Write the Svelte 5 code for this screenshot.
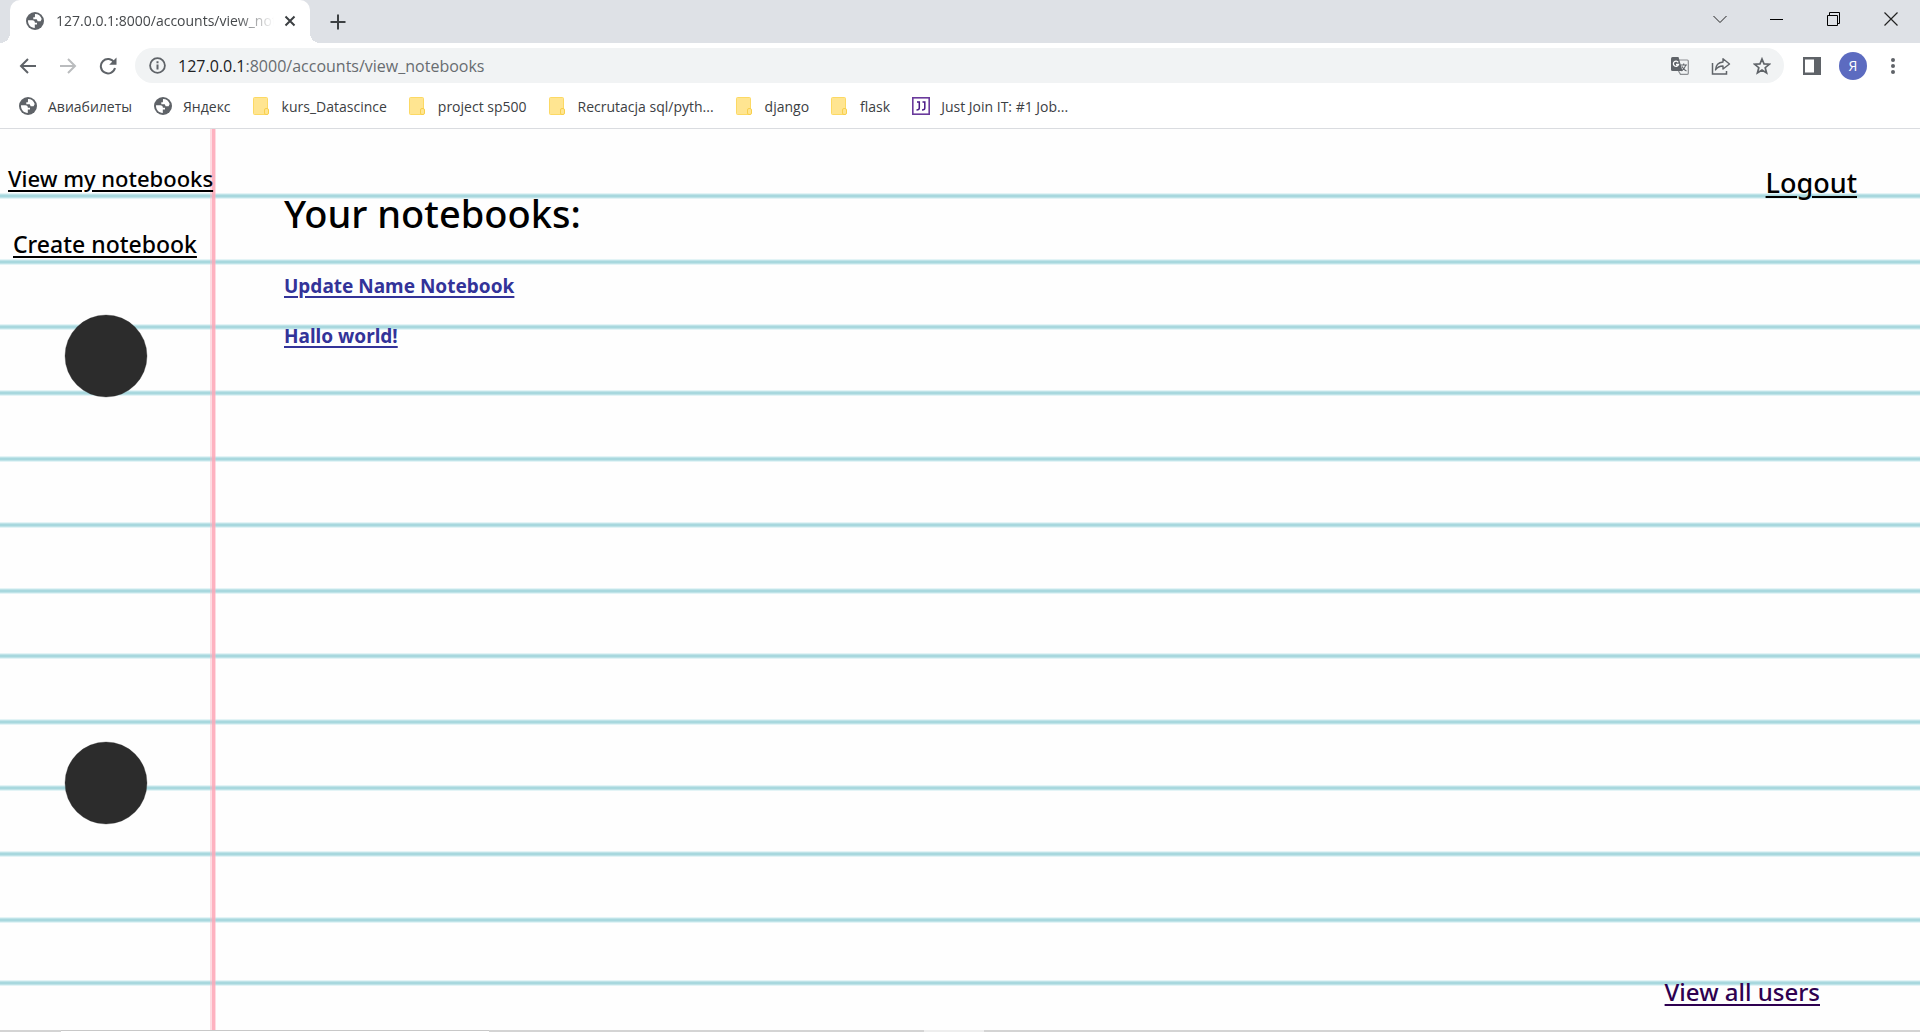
<script>
  const bookmarks = [
    { icon: 'globe', label: 'Авиабилеты' },
    { icon: 'globe', label: 'Яндекс' },
    { icon: 'folder', label: 'kurs_Datascince' },
    { icon: 'folder', label: 'project sp500' },
    { icon: 'folder', label: 'Recrutacja sql/pyth...' },
    { icon: 'folder', label: 'django' },
    { icon: 'folder', label: 'flask' },
    { icon: 'jj', label: 'Just Join IT: #1 Job...' }
  ];
  const notebooks = ['Update Name Notebook', 'Hallo world!'];
  const rules = [67, 133, 198, 264, 330, 396, 462, 527, 593, 659, 725, 791, 854];
  const holes = [227, 654];
</script>

{#snippet globe()}
  <svg class="icon" viewBox="0 0 18 18" aria-hidden="true">
    <circle cx="9" cy="9" r="9" fill="#5f6368" />
    <path d="M2 8.300 6.300 8.300C8.100 8.300 8.900 9.200 8.900 10.700H11V12.600H8.800V16C4.800 16 1.700 12.600 2 8.300Z" fill="#fff" />
    <path d="M9 2.100C12.200 2 14.800 4 15.700 7L14.600 9.200H11.700L10.700 7.300H7.300V5.200H8.900Z" fill="#fff" />
  </svg>
{/snippet}

<div class="window">
  <header>
    <div class="tabstrip">
      <div class="tab">
        {@render globe()}
        <span class="tab-title">127.0.0.1:8000/accounts/view_notebooks</span>
        <button class="plain tab-close" aria-label="Close tab">
          <svg width="12" height="12" viewBox="0 0 12 12"><path d="M1.500 1.500 10.500 10.500M10.500 1.500 1.500 10.500" stroke="#3c4043" stroke-width="2" /></svg>
        </button>
      </div>
      <button class="plain new-tab" aria-label="New tab">
        <svg width="16" height="16" viewBox="0 0 16 16"><path d="M8 .5V15.500M.5 8H15.500" stroke="#3c4043" stroke-width="2" /></svg>
      </button>
      <div class="controls">
        <button class="plain" aria-label="Search tabs">
          <svg width="14" height="14" viewBox="0 0 14 14"><path d="M.5 4 7 10.500 13.500 4" fill="none" stroke="#222" /></svg>
        </button>
        <button class="plain" aria-label="Minimize">
          <svg width="14" height="14" viewBox="0 0 14 14"><path d="M0 7.500H13" stroke="#000" /></svg>
        </button>
        <button class="plain" aria-label="Restore">
          <svg width="14" height="14" viewBox="0 0 14 14"><path d="M.5 3.500H10.500V13.500H.5ZM2.500 3V.5H12.500V11.500H11" fill="none" stroke="#000" /></svg>
        </button>
        <button class="plain" aria-label="Close">
          <svg width="14" height="14" viewBox="0 0 14 14"><path d="M.5 .5 13.500 13.500M13.500 .5 .5 13.500" stroke="#222" stroke-width="1.200" /></svg>
        </button>
      </div>
    </div>

    <div class="toolbar">
      <button class="plain nav" aria-label="Back">
        <svg width="18" height="18" viewBox="0 0 18 18"><path d="M17 9H2M9 2 2 9 9 16" fill="none" stroke="#5f6368" stroke-width="2" /></svg>
      </button>
      <button class="plain nav" aria-label="Forward">
        <svg width="18" height="18" viewBox="0 0 18 18"><path d="M1 9H16M9 2 16 9 9 16" fill="none" stroke="#babcbe" stroke-width="2" /></svg>
      </button>
      <button class="plain nav" aria-label="Reload">
        <svg width="18" height="18" viewBox="0 0 18 18"><path d="M15.200 5.500A7.200 7.200 0 1 0 16 11" fill="none" stroke="#5f6368" stroke-width="2" /><path d="M17.500 .5V7.800H10.200Z" fill="#5f6368" /></svg>
      </button>
      <div class="omnibox">
        <svg width="17" height="17" viewBox="0 0 17 17" aria-hidden="true"><circle cx="8.500" cy="8.500" r="7.400" fill="none" stroke="#5f6368" stroke-width="1.800" /><path d="M8.500 7.500V12.500M8.500 4.300V6.200" stroke="#5f6368" stroke-width="2" /></svg>
        <span class="url"><span class="host">127.0.0.1</span>:8000/accounts/view_notebooks</span>
        <div class="actions">
          <button class="plain" aria-label="Translate this page">
            <svg width="18" height="18" viewBox="0 0 18 18">
              <path d="M7 3H16.300Q17.300 3 17.300 4V16.300Q17.300 17.300 16.300 17.300H9.500L7.500 14" fill="#f1f3f4" stroke="#8b8e92" stroke-width="1.200" />
              <path d="M1.500 0H7.500L11.500 14H1.500Q0 14 0 12.500V1.500Q0 0 1.500 0Z" fill="#5f6368" />
              <path d="M7.200 5.300A2.600 2.600 0 1 0 7.500 7.500H5" fill="none" stroke="#fff" stroke-width="1.300" />
              <path d="M9.500 8H16M12.700 6.500V8M14.800 8Q14 11.500 10.500 14M11 9.500Q12.500 12.500 15.500 14" fill="none" stroke="#5f6368" stroke-width="1.100" />
            </svg>
          </button>
          <button class="plain" aria-label="Share this page">
            <svg width="20" height="18" viewBox="0 0 20 18"><path d="M1.500 6V17H15.500V14" fill="none" stroke="#5f6368" stroke-width="1.500" /><path d="M4.500 13Q5 5.500 12 5V1.800L18.500 7 12 12V9Q7 9 4.500 13Z" fill="none" stroke="#5f6368" stroke-width="1.400" stroke-linejoin="round" /></svg>
          </button>
          <button class="plain" aria-label="Bookmark this page">
            <svg width="18" height="18" viewBox="0 0 18 18"><path d="M9 2 11 6.900 16.500 7.200 12.200 10.700 13.600 16 9 13.100 4.400 16 5.800 10.700 1.500 7.200 7 6.900Z" fill="none" stroke="#5f6368" stroke-width="1.700" /></svg>
          </button>
        </div>
      </div>
      <button class="plain side-panel" aria-label="Side panel">
        <svg width="18" height="18" viewBox="0 0 18 18"><path d="M0 0H18V18H0ZM2 2.500V15.500H11V2.500Z" fill="#5f6368" fill-rule="evenodd" /></svg>
      </button>
      <button class="avatar" aria-label="Profile">Я</button>
      <button class="plain more" aria-label="Menu">
        <svg width="4" height="18" viewBox="0 0 4 18" fill="#5f6368"><circle cx="2" cy="3" r="2" /><circle cx="2" cy="9" r="2" /><circle cx="2" cy="15" r="2" /></svg>
      </button>
    </div>

    <nav class="bookmarks" aria-label="Bookmarks">
      {#each bookmarks as item}
        <a href="#bookmark">
          {#if item.icon === 'globe'}
            {@render globe()}
          {:else if item.icon === 'folder'}
            <svg class="icon" viewBox="0 0 18 18" aria-hidden="true"><rect x=".5" y=".5" width="14" height="17" rx="1" fill="#ffe591" stroke="#fcd964" /><rect x="11.500" y="11.500" width="4" height="6" rx="1.500" fill="#ffe591" stroke="#f8cf4c" /></svg>
          {:else}
            <svg class="icon" viewBox="0 0 18 18" aria-hidden="true"><rect x=".8" y=".8" width="16.400" height="16.400" fill="#fff" stroke="#6a3a9c" stroke-width="1.600" /><path d="M5 5H7.300V11Q7.300 13 4.500 13M10.500 5H12.800V11Q12.800 13 10 13" fill="none" stroke="#4a1a86" stroke-width="1.500" /></svg>
          {/if}
          <span>{item.label}</span>
        </a>
      {/each}
    </nav>
  </header>

  <main>
    <svg class="paper" aria-hidden="true">
      <g shape-rendering="crispEdges">
        {#each rules as y}
          <rect x="0" y={y - 3} width="100%" height="6" fill="#e3f4f6" />
          <rect x="0" y={y - 2} width="100%" height="4" fill="#bfe3e8" />
          <rect x="0" y={y - 1} width="100%" height="2" fill="#a8d8de" />
        {/each}
        <rect x="210" y="0" width="6" height="100%" fill="#ffb3c1" fill-opacity=".45" />
        <rect x="212" y="0" width="3" height="100%" fill="#fda4b4" fill-opacity=".75" />
      </g>
      {#each holes as y}
        <circle cx="106" cy={y} r="41" fill="#2c2c2c" stroke="#2c2c2c" stroke-opacity=".3" />
      {/each}
    </svg>
    <nav class="sidebar" aria-label="Notebooks">
      <a class="view" href="#view">View my notebooks</a>
      <a class="create" href="#create">Create notebook</a>
    </nav>
    <section>
      <h1>Your notebooks:</h1>
      <ul>
        {#each notebooks as name}
          <li><a href="#notebook">{name}</a></li>
        {/each}
      </ul>
    </section>
    <div class="account">
      <a class="logout" href="#logout">Logout</a>
      <a class="users" href="#users">View all users</a>
    </div>
  </main>
  <footer><i class="input"></i><i class="gap"></i></footer>
</div>

<style>
  :global(body) {
    background: #fff;
    font-family: "Open Sans", "Noto Sans", sans-serif;
  }
  .window {
    display: flex;
    flex-direction: column;
    min-height: 100vh;
    padding-right: 9px;
    box-sizing: border-box;
  }
  .plain {
    display: flex;
    align-items: center;
    justify-content: center;
    padding: 0;
    border: 0;
    background: none;
  }
  .icon {
    flex: none;
    width: 18px;
    height: 18px;
  }
  .tabstrip {
    display: flex;
    height: 43px;
    padding: 0 1px 0 10px;
    background: #dee1e6;
  }
  .tab {
    position: relative;
    display: flex;
    align-items: center;
    width: 300px;
    height: 43px;
    padding: 0 14px 2px 16px;
    box-sizing: border-box;
    border-radius: 10px 10px 0 0;
    background: #fff;
  }
  .tab::before,
  .tab::after {
    content: "";
    position: absolute;
    bottom: 0;
    width: 10px;
    height: 10px;
  }
  .tab::before {
    left: -10px;
    background: radial-gradient(circle at 0 0, transparent 10px, #fff 10px);
  }
  .tab::after {
    right: -10px;
    background: radial-gradient(circle at 100% 0, transparent 10px, #fff 10px);
  }
  .tab-title {
    flex: 1;
    min-width: 0;
    margin: 0 10px 0 12px;
    overflow: hidden;
    white-space: nowrap;
    font-size: 14px;
    color: #45484b;
    mask-image: linear-gradient(to right, #000 180px, transparent 218px);
  }
  .new-tab {
    width: 56px;
  }
  .controls {
    display: flex;
    margin-left: auto;
    padding-bottom: 6px;
  }
  .controls button {
    width: 57px;
  }
  .toolbar {
    display: flex;
    align-items: center;
    height: 45px;
    padding: 0 25px 0 8px;
  }
  .nav {
    width: 40px;
    height: 36px;
  }
  .omnibox {
    display: flex;
    flex: 1;
    align-items: center;
    gap: 12px;
    height: 35px;
    margin-left: 7px;
    padding: 0 13px 0 14px;
    box-sizing: border-box;
    border-radius: 18px;
    background: #f1f3f4;
  }
  .actions {
    display: flex;
    gap: 22px;
  }
  .url {
    flex: 1;
    font-size: 16px;
    color: #686c70;
  }
  .host {
    color: #202124;
  }
  .side-panel {
    margin-left: 19px;
  }
  .avatar {
    width: 28px;
    height: 28px;
    margin: 0 24px 0 18px;
    padding: 0;
    border: 0;
    border-radius: 50%;
    background: #5c6bc0;
    color: #fff;
    font: 14px/28px "Open Sans", sans-serif;
  }
  .bookmarks {
    display: flex;
    align-items: center;
    gap: 22px;
    height: 41px;
    padding: 0 19px 4px;
    box-sizing: border-box;
    border-bottom: 1px solid #dadce0;
  }
  .bookmarks a {
    display: flex;
    align-items: center;
    gap: 11px;
    color: #3c4043;
    font-size: 14px;
    white-space: nowrap;
    text-decoration: none;
  }
  main {
    position: relative;
    display: flex;
    flex: 1;
    background: #fefefe;
    color: #000;
    font-family: "Noto Sans", "Open Sans", sans-serif;
    font-weight: 500;
  }
  main a {
    color: inherit;
    text-underline-offset: 3px;
    text-decoration-thickness: 2px;
  }
  .paper {
    position: absolute;
    width: 100%;
    height: 100%;
  }
  .sidebar,
  section,
  .account {
    position: relative;
    display: flex;
    flex-direction: column;
    white-space: nowrap;
  }
  .sidebar {
    width: 284px;
    gap: 34px;
    padding: 33px 0 0 8px;
    box-sizing: border-box;
    align-items: flex-start;
    font-size: 23px;
    line-height: 32px;
  }
  .view {
    font-size: 22px;
  }
  .create {
    margin-left: 5px;
  }
  section {
    flex: 1;
    padding-top: 56px;
  }
  h1 {
    margin: 0;
    font-size: 38px;
    line-height: 56px;
    font-weight: 500;
  }
  ul {
    display: flex;
    flex-direction: column;
    gap: 20px;
    margin: 30px 0 0;
    padding: 0;
    list-style: none;
    color: #339;
    font-size: 19px;
    line-height: 30px;
    font-weight: 700;
  }
  .account {
    justify-content: space-between;
    align-items: flex-end;
    padding: 36px 63px 20px 0;
    line-height: 36px;
  }
  .logout {
    font-size: 27px;
  }
  main .users {
    margin-right: 37px;
    color: #2e0050;
    font-size: 24px;
  }
  footer {
    display: flex;
    height: 2px;
    padding-left: 61px;
    background: #d4d4d4;
  }
  .input {
    width: 428px;
    border-top: 1px solid #c8c8c8;
    background: #fff;
  }
  .gap {
    width: 60px;
    margin-left: 435px;
    background: #eee;
  }
</style>
